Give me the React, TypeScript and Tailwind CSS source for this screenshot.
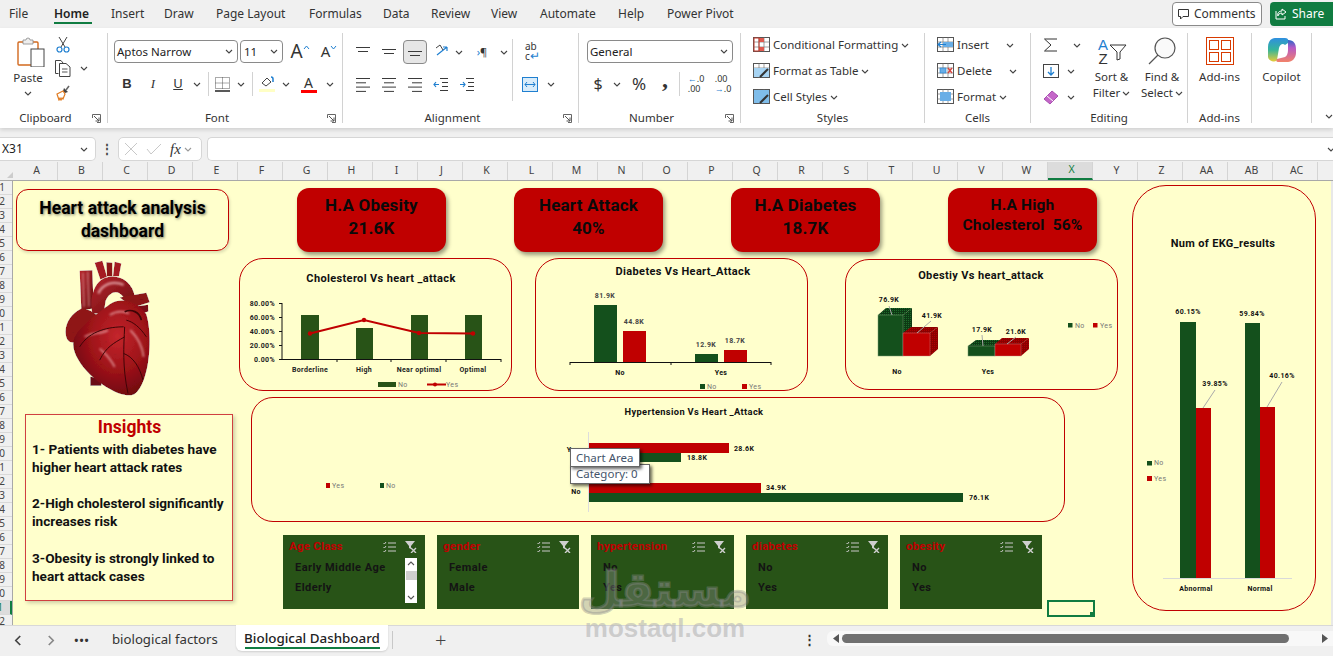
import React from "react";

const G = "#14501c";
const G2 = "#285317";
const R = "#c00000";

const Chev = ({ c = "#444", className = "" }: { c?: string; className?: string }) => (
  <svg width="8" height="5" viewBox="0 0 8 5" className={"shrink-0 " + className}>
    <path d="M1 1l3 3 3-3" fill="none" stroke={c} strokeWidth="1.1" />
  </svg>
);

const Launcher = () => (
  <svg width="9" height="9" viewBox="0 0 9 9" className="absolute right-[6px] bottom-[0px]">
    <path d="M.5 4V.5H8.5V8.5H5" fill="none" stroke="#666" />
    <path d="M2 2l5 5M7 3.5V7H3.5" fill="none" stroke="#555" />
  </svg>
);

const Group = ({
  className,
  label,
  launcher,
  children,
}: {
  className: string;
  label: string;
  launcher?: boolean;
  children?: React.ReactNode;
}) => (
  <div className={"relative flex flex-col border-r border-[#d2d2d2] shrink-0 " + className}>
    <div className="flex-1 min-h-0">{children}</div>
    <div className={"h-[15px] leading-[19px] text-center text-[11.5px] text-[#333] " + (launcher ? "pr-[16px]" : "")}>{label}</div>
    {launcher && <Launcher />}
  </div>
);

const Lines = ({ rows, dy = 0, gap = 4 }: { rows: [number, number][]; dy?: number; gap?: number }) => (
  <svg width="16" height="16" viewBox="0 0 16 16">
    {rows.map(([a, b], i) => (
      <path key={i} d={`M${a} ${3.5 + i * gap + dy}H${b}`} stroke="#3a3a3a" />
    ))}
  </svg>
);

const Cell = ({ className, children }: { className: string; children?: React.ReactNode }) => (
  <div className={"flex items-center justify-center shrink-0 " + className}>{children}</div>
);

const Combo = ({ className, text }: { className: string; text: string }) => (
  <div className={"flex items-center justify-between h-[23px] rounded-[4px] border border-[#8a8a8a] pl-[2px] pr-[4px] text-[11.5px] text-[#222] shrink-0 " + className}>
    <span>{text}</span>
    <Chev />
  </div>
);

const StyleRow = ({ icon, text, chevClass = "ml-[3px]" }: { icon: React.ReactNode; text: string; chevClass?: string }) => (
  <div className="flex items-center h-[26px] text-[11.5px] text-[#333]">
    <span className="w-[20px] flex justify-start">{icon}</span>
    <span>{text}</span>
    <Chev className={chevClass} />
  </div>
);

const GridIcon = ({ children }: { children?: React.ReactNode }) => (
  <svg width="17" height="16" viewBox="0 0 17 16">
    <rect x=".5" y=".5" width="16" height="14" fill="#fff" stroke="#555" />
    <path d="M.5 5h16M.5 10h16M6 .5v14M11 .5v14" stroke="#777" strokeWidth=".7" />
    {children}
  </svg>
);

const Heart = () => (
  <svg viewBox="190 240 270 410" className="w-[90px] h-[137px] block" aria-hidden="true">
    <defs>
      <radialGradient id="hb" cx="58%" cy="38%" r="75%">
        <stop offset="0" stopColor="#c4262c" />
        <stop offset=".5" stopColor="#9c1218" />
        <stop offset="1" stopColor="#5c070b" />
      </radialGradient>
      <linearGradient id="ha" x1="0" y1="0" x2="1" y2="1">
        <stop offset="0" stopColor="#b5252b" />
        <stop offset="1" stopColor="#6a0b10" />
      </linearGradient>
      <filter id="gloss" x="0" y="0" width="100%" height="100%">
        <feTurbulence type="fractalNoise" baseFrequency=".05 .07" numOctaves="3" seed="7" result="n" />
        <feDiffuseLighting in="n" surfaceScale="2.5" diffuseConstant="1.3" lightingColor="#fff" result="d">
          <feDistantLight azimuth="235" elevation="60" />
        </feDiffuseLighting>
        <feComposite in="d" in2="SourceAlpha" operator="in" result="dc" />
        <feBlend in="SourceGraphic" in2="dc" mode="multiply" />
      </filter>
      <filter id="soft" x="-10%" y="-10%" width="120%" height="120%">
        <feGaussianBlur stdDeviation="2.5" />
      </filter>
    </defs>
    <g filter="url(#gloss)">
      <path d="M272 590L305 595 305 617 272 617Z" fill="#6b0e12" />
      <path d="M240 272L278 270 282 385 245 390Z" fill="url(#ha)" />
      <path d="M285 248L308 242 322 290 302 298Z" fill="#a51c22" />
      <path d="M320 246L338 248 338 288 322 288Z" fill="#8c1318" />
      <path d="M345 245L365 250 358 288 340 288Z" fill="#a51c22" />
      <path d="M278 400C268 340 290 300 320 292C362 280 400 310 405 348L372 352C355 328 332 332 318 362L312 400Z" fill="url(#ha)" />
      <path d="M360 352L440 338 450 366 400 382Z" fill="#8c1318" />
      <path d="M385 382L445 374 446 394 400 408Z" fill="#7a1015" />
      <path d="M245 385C215 400 195 430 198 460C200 490 222 492 232 480C250 440 280 420 292 405C280 395 262 385 245 385Z" fill="#8f1419" />
      <path d="M222 480C235 440 290 402 330 372C372 345 420 372 440 402C452 440 452 500 446 540C440 590 420 642 395 645C360 650 300 612 270 582C240 552 214 512 222 480Z" fill="url(#hb)" />
    </g>
    <g filter="url(#soft)" fill="none" opacity=".75">
      <path d="M250 278L253 380M264 274L268 380" stroke="#e9a5a8" strokeWidth="4" />
      <path d="M296 340C308 312 340 300 372 314" stroke="#f3c0c2" strokeWidth="7" />
      <path d="M392 450C412 470 428 500 432 530M255 470C280 455 305 462 325 450M330 405C350 392 370 392 388 400M300 505C315 520 330 530 345 560" stroke="#f1b8ba" strokeWidth="5" />
    </g>
    <path d="M375 440C372 500 368 560 385 640M375 470C340 490 320 500 300 540M372 520C400 530 420 560 430 600M372 440C330 440 270 450 240 500M380 420C400 425 420 440 440 470" stroke="#3f0406" strokeWidth="3" fill="none" />
    <path d="M375 395C395 385 420 395 425 420" stroke="#3f0406" strokeWidth="5" fill="none" />
  </svg>
);

const T = ({
  x,
  y,
  s = 7,
  c = "#111",
  a = "middle",
  w = 700,
  ls = 0.35,
  children,
}: {
  x: number;
  y: number;
  s?: number;
  c?: string;
  a?: "middle" | "start" | "end";
  w?: number;
  ls?: number;
  children: React.ReactNode;
}) => (
  <text x={x} y={y} fontSize={s} fill={c} textAnchor={a} fontWeight={w} fontFamily="Roboto, sans-serif" letterSpacing={ls} dominantBaseline="central">
    {children}
  </text>
);

const SlicerIcons = () => (
  <div className="flex items-center gap-[8px]">
    <svg width="13" height="12" viewBox="0 0 13 12">
      <path d="M5 2h8M5 6h8M5 10h8" stroke="#c9c9c9" />
      <path d="M.5 2l1 1L3 1M.5 6l1 1L3 5M.5 10l1 1L3 9" fill="none" stroke="#c9c9c9" />
    </svg>
    <svg width="13" height="12" viewBox="0 0 13 12">
      <path d="M1 0h10L7 5v3L5 7V5Z" fill="#cfcfcf" />
      <path d="M7 7l5 5M12 7l-5 5" stroke="#cfcfcf" strokeWidth="1.4" />
    </svg>
  </div>
);

const Slicer = ({ title, items, scroll, className = "w-[142px]" }: { title: string; items: string[]; scroll?: boolean; className?: string }) => (
  <div className={"relative h-[74px] bg-[#285317] pl-[6px] pr-[6px] pt-[2px] shrink-0 " + className}>
    <div className="flex items-center justify-between h-[20px] pr-[2px]">
      <span className="text-[11.5px] font-bold text-[#c00000] tracking-[0.2px]">{title}</span>
      <SlicerIcons />
    </div>
    <div className="mt-[1px] pl-[6px] text-[11px] font-bold text-[#141414] tracking-[0.45px]">
      {items.map((t) => (
        <div key={t} className="h-[20px] leading-[20px]">
          {t}
        </div>
      ))}
    </div>
    {scroll && (
      <div className="absolute right-[8px] top-[23px] w-[12px] h-[45px] bg-white flex flex-col items-center justify-between py-[3px]">
        <Chev c="#555" className="rotate-180" />
        <div className="w-[11px] h-[9px] -mt-[10px] bg-[#cfcfcf]" />
        <Chev c="#555" />
      </div>
    )}
  </div>
);

const rows = Array.from({ length: 32 }, (_, i) => i + 1);
const cols = "A B C D E F G H I J K L M N O P Q R S T U V W X Y Z AA AB AC".split(" ");

const tabs: [string, string][] = [
  ["File", "w-[45px]"],
  ["Home", "w-[57px]"],
  ["Insert", "w-[53px]"],
  ["Draw", "w-[52px]"],
  ["Page Layout", "w-[93px]"],
  ["Formulas", "w-[74px]"],
  ["Data", "w-[48px]"],
  ["Review", "w-[60px]"],
  ["View", "w-[49px]"],
  ["Automate", "w-[78px]"],
  ["Help", "w-[49px]"],
  ["Power Pivot", "w-[80px]"],
];

export default function App() {
  return (
    <div className="relative w-[1333px] h-[656px] overflow-hidden bg-[#f0f0f0] font-['Noto_Sans',sans-serif] text-[#333]">
      {/* Tabs */}
      <div className="h-[28px] flex items-center pl-[9px] text-[12px] relative">
        {tabs.map(([t, w]) => (
          <div key={t} className={"relative shrink-0 " + w}>
            <span className={t === "Home" ? "font-semibold text-[#222]" : ""}>{t}</span>
            {t === "Home" && <div className="absolute left-0 top-[17px] w-[38px] h-[2px] bg-[#107c41]" />}
          </div>
        ))}
        <div className="ml-auto flex items-center gap-[8px] -mr-[6px]">
          <div className="w-[90px] h-[24px] rounded-[4px] border border-[#8a8a8a] bg-white flex items-center pl-[5px] gap-[5px] text-[12px]">
            <svg width="11" height="11" viewBox="0 0 11 11">
              <path d="M.5.5h10v7H5L2.5 10V7.5h-2Z" fill="none" stroke="#333" />
            </svg>
            Comments
          </div>
          <div className="w-[69px] h-[24px] rounded-l-[4px] bg-[#107c41] text-white flex items-center pl-[5px] gap-[5px] text-[12px]">
            <svg width="12" height="12" viewBox="0 0 12 12">
              <path d="M7 1l4 3-4 3V5C4 5 3 7 3 8 2 5 4 3 7 3ZM1 3v8h9V8" fill="none" stroke="#fff" />
            </svg>
            Share
          </div>
        </div>
      </div>

      {/* Ribbon */}
      <div className="h-[100px] bg-white flex py-[5px] [box-shadow:0_2px_4px_#0002] relative">
        <Group className="w-[108px]" label="Clipboard" launcher>
          <div className="flex">
            <div className="ml-[9px] w-[38px] flex flex-col items-center text-[11.5px]">
              <svg width="28" height="30" viewBox="0 0 28 30" className="mt-[4px] mb-[3px] ml-[5px]">
                <rect x="1" y="5" width="20" height="23" rx="1" fill="#fff" stroke="#d2691e" strokeWidth="1.4" />
                <path d="M6 5V3h3a2 2 0 0 1 4 0h3v4H6Z" fill="#eee" stroke="#888" strokeWidth=".8" />
                <rect x="14" y="12" width="13" height="18" fill="#fff" stroke="#444" />
              </svg>
              <span className="leading-[16px]">Paste</span>
              <Chev className="mt-[5px]" />
            </div>
            <div className="ml-[8px] flex flex-col items-start pt-[3px]">
              <svg width="16" height="17" viewBox="0 0 16 17" className="mb-[7px]">
                <path d="M4 1l6 10M12 1L6 11" stroke="#444" strokeWidth="1" />
                <circle cx="4.5" cy="13.5" r="2.5" fill="none" stroke="#1f7fd0" strokeWidth="1.2" />
                <circle cx="11.5" cy="13.5" r="2.5" fill="none" stroke="#1f7fd0" strokeWidth="1.2" />
              </svg>
              <div className="flex items-center gap-[9px] mb-[8px]">
                <svg width="16" height="17" viewBox="0 0 16 17">
                  <path d="M3.5 13.5H.5V.5H6L8 3" fill="none" stroke="#444" />
                  <path d="M4.5 3.5H11L15 7V16.5H4.5Z" fill="#fff" stroke="#444" />
                  <path d="M7 9h5.5M7 12h5.5" stroke="#555" />
                </svg>
                <Chev />
              </div>
              <svg width="16" height="16" viewBox="0 0 16 16">
                <path d="M9 3l4 4-3 1-2-2Z" fill="#444" />
                <path d="M8 6L2 9l2 6 1-2 1 2 1-2 1 1 2-5Z" fill="#fff" stroke="#e07a1f" strokeWidth="1.2" />
                <path d="M11 5l3-4" stroke="#666" strokeWidth="1.6" />
              </svg>
            </div>
          </div>
        </Group>

        <Group className="w-[235px]" label="Font" launcher>
          <div className="flex items-center gap-[2px] mt-[7px] ml-[6px] h-[23px]">
            <Combo className="w-[124px]" text="Aptos Narrow" />
            <Combo className="w-[43px] pl-[3px]" text="11" />
            <Cell className="w-[28px] ml-[1px] text-[#333]">
              <span className="text-[19px] leading-none">A</span>
              <svg width="7" height="5" viewBox="0 0 7 5" className="mb-[8px]"><path d="M1 4l2.5-3L6 4" fill="none" stroke="#1f7fd0" /></svg>
            </Cell>
            <Cell className="w-[26px] text-[#333]">
              <span className="text-[15px] leading-none">A</span>
              <svg width="7" height="5" viewBox="0 0 7 5" className="mb-[8px]"><path d="M1 1l2.5 3L6 1" fill="none" stroke="#1f7fd0" /></svg>
            </Cell>
          </div>
          <div className="flex items-center mt-[9px] ml-[6px] h-[24px]">
            <Cell className="w-[26px] font-bold text-[13px] font-['Liberation_Sans']">B</Cell>
            <Cell className="w-[26px] italic text-[13px] font-['Liberation_Serif']">I</Cell>
            <Cell className="w-[24px] text-[13px] underline">U</Cell>
            <Cell className="w-[14px]"><Chev /></Cell>
            <div className="w-px h-[24px] bg-[#d2d2d2] ml-[4px]" />
            <Cell className="w-[26px]">
              <svg width="15" height="15" viewBox="0 0 15 15">
                <path d="M.5.5h14v11H.5ZM7.5.5v11M.5 6h14" stroke="#555" strokeDasharray="1 1" fill="none" />
                <path d="M0 14h15" stroke="#222" strokeWidth="1.5" />
              </svg>
            </Cell>
            <Cell className="w-[12px]"><Chev /></Cell>
            <div className="w-px h-[24px] bg-[#d2d2d2] ml-[5px]" />
            <Cell className="w-[28px]">
              <svg width="16" height="16" viewBox="0 0 16 16">
                <path d="M3 7l5-5 4 4-5 4Z" fill="#fff" stroke="#444" />
                <path d="M12 1a2 2 0 0 1 2 2v3" fill="none" stroke="#1f7fd0" strokeWidth="1.5" />
                <rect x="0" y="13" width="16" height="3" fill="#ffffc5" />
              </svg>
            </Cell>
            <Cell className="w-[10px]"><Chev /></Cell>
            <Cell className="w-[35px]">
              <div className="flex flex-col items-center">
                <span className="text-[14px] leading-[14px]">A</span>
                <div className="w-[16px] h-[3px] bg-[#ff0000]" />
              </div>
            </Cell>
            <Cell className="w-[8px]"><Chev /></Cell>
          </div>
        </Group>

        <Group className="w-[236px]" label="Alignment" launcher>
          <div className="flex h-[77px]">
            <div className="ml-[7px]">
              <div className="flex items-center mt-[7px] h-[24px]">
                <Cell className="w-[26px]"><Lines rows={[[1, 15], [3, 13]]} /></Cell>
                <Cell className="w-[26px]"><Lines rows={[[1, 15], [3, 13]]} dy={2} /></Cell>
                <Cell className="w-[24px] mx-[1px] h-[24px] rounded-[4px] border border-[#8a8a8a] bg-[#e6e6e6]"><Lines rows={[[1, 15], [3, 13]]} dy={4} /></Cell>
                <Cell className="w-[26px] pl-[3px]">
                  <svg width="16" height="16" viewBox="0 0 16 16">
                    <path d="M2 11L12 3M12 3H8M12 3v4" fill="none" stroke="#1f7fd0" strokeWidth="1.2" />
                    <path d="M1 4l4-3 3 5" fill="none" stroke="#444" />
                  </svg>
                </Cell>
                <Cell className="w-[10px]"><Chev /></Cell>
                <Cell className="w-[32px] pl-[4px] text-[11px]">
                  <span className="text-[#1f7fd0]">›</span>¶
                </Cell>
                <Cell className="w-[10px] ml-[3px]"><Chev /></Cell>
              </div>
              <div className="flex items-center mt-[8px] h-[24px]">
                <Cell className="w-[26px]"><Lines rows={[[1, 15], [1, 11], [1, 15], [1, 11]]} dy={-1} gap={4.3} /></Cell>
                <Cell className="w-[26px]"><Lines rows={[[1, 15], [3, 13], [1, 15], [3, 13]]} dy={-1} gap={4.3} /></Cell>
                <Cell className="w-[26px]"><Lines rows={[[1, 15], [5, 15], [1, 15], [5, 15]]} dy={-1} gap={4.3} /></Cell>
                <Cell className="w-[26px]">
                  <svg width="16" height="16" viewBox="0 0 16 16">
                    <path d="M7 2.5h8M9 6.5h6M9 10.5h6M7 14.5h8" stroke="#3a3a3a" />
                    <path d="M6 8.5H1M3 6L1 8.5 3 11" fill="none" stroke="#1f7fd0" strokeWidth="1.2" />
                  </svg>
                </Cell>
                <Cell className="w-[26px]">
                  <svg width="16" height="16" viewBox="0 0 16 16">
                    <path d="M7 2.5h8M9 6.5h6M9 10.5h6M7 14.5h8" stroke="#3a3a3a" />
                    <path d="M1 8.5h5M4 6l2 2.5L4 11" fill="none" stroke="#1f7fd0" strokeWidth="1.2" />
                  </svg>
                </Cell>
              </div>
            </div>
            <div className="w-px h-[62px] mt-[6px] ml-[3px] bg-[#d2d2d2]" />
            <div className="ml-[9px]">
              <div className="mt-[6px] h-[24px] flex items-center ml-[3px]">
                <div className="text-[10px] leading-[9px] w-[24px]">
                  ab
                  <br />c<span className="text-[#1f7fd0] text-[12px]">↵</span>
                </div>
              </div>
              <div className="flex items-center mt-[9px] gap-[9px] h-[24px]">
                <svg width="16" height="15" viewBox="0 0 16 15">
                  <rect x=".5" y=".5" width="15" height="14" fill="#d8ecfa" stroke="#1f7fd0" />
                  <path d="M3 7.5h10M5 5L3 7.5 5 10M11 5l2 2.5L11 10" fill="none" stroke="#1f7fd0" />
                </svg>
                <Chev />
              </div>
            </div>
          </div>
        </Group>

        <Group className="w-[162px]" label="Number" launcher>
          <Combo className="w-[146px] mt-[7px] ml-[8px]" text="General" />
          <div className="flex items-center mt-[9px] ml-[7px] h-[24px]">
            <Cell className="w-[24px] text-[16px]">$</Cell>
            <Cell className="w-[14px]"><Chev /></Cell>
            <Cell className="w-[30px] text-[17px]">%</Cell>
            <Cell className="w-[22px] text-[24px] font-bold pb-[10px] font-['Liberation_Serif']">,</Cell>
            <div className="w-px h-[24px] bg-[#d2d2d2] ml-[3px]" />
            <Cell className="w-[28px] ml-[2px]">
              <div className="text-[9px] leading-[10px] text-[#333]">
                <span className="text-[#1f7fd0]">←</span>.0
                <br />.00
              </div>
            </Cell>
            <Cell className="w-[26px]">
              <div className="text-[9px] leading-[10px] text-[#333]">
                .00
                <br />
                <span className="text-[#1f7fd0]">→</span>.0
              </div>
            </Cell>
          </div>
        </Group>

        <Group className="w-[184px]" label="Styles">
          <div className="pl-[12px] -mt-[1px]">
            <StyleRow
              text="Conditional Formatting"
              icon={
                <GridIcon>
                  <rect x="6" y="1" width="5" height="4" fill="#e05a4f" />
                  <rect x="6" y="10" width="5" height="4" fill="#e05a4f" />
                  <rect x="1" y="1" width="5" height="13" fill="none" stroke="#c0392b" />
                </GridIcon>
              }
            />
            <StyleRow
              text="Format as Table"
              icon={
                <GridIcon>
                  <rect x="1" y="5" width="15" height="9" fill="#a7d4f3" />
                  <path d="M7 14l8-8" stroke="#333" strokeWidth="2" />
                </GridIcon>
              }
            />
            <StyleRow
              text="Cell Styles"
              icon={
                <GridIcon>
                  <rect x="1" y="1" width="15" height="13" fill="#7fbdea" />
                  <path d="M7 14l8-8" stroke="#333" strokeWidth="2" />
                </GridIcon>
              }
            />
          </div>
        </Group>

        <Group className="w-[106px]" label="Cells">
          <div className="pl-[12px] -mt-[1px]">
            <StyleRow
              text="Insert"
              chevClass="ml-[17px]"
              icon={
                <GridIcon>
                  <rect x="6" y="5" width="10" height="5" fill="#69aee6" />
                  <path d="M9 7.5H1M4 5L1 7.5 4 10" fill="none" stroke="#1f7fd0" strokeWidth="1.2" />
                </GridIcon>
              }
            />
            <StyleRow
              text="Delete"
              chevClass="ml-[17px]"
              icon={
                <GridIcon>
                  <rect x="3" y="5" width="6" height="5" fill="#69aee6" stroke="#1f7fd0" strokeWidth=".6" />
                  <path d="M11 5l4 5M15 5l-4 5" stroke="#d9413a" strokeWidth="1.3" />
                </GridIcon>
              }
            />
            <StyleRow
              text="Format"
              icon={
                <GridIcon>
                  <rect x="3" y="3" width="11" height="9" fill="#69aee6" />
                </GridIcon>
              }
            />
          </div>
        </Group>

        <Group className="w-[157px]" label="Editing">
          <div className="flex">
            <div className="w-[58px] pl-[12px] -mt-[1px]">
              <div className="flex items-center h-[26px] gap-[15px]">
                <svg width="15" height="14" viewBox="0 0 15 14">
                  <path d="M14 1H1.5L8 7 1.5 13H14" fill="none" stroke="#333" />
                </svg>
                <Chev />
              </div>
              <div className="flex items-center h-[26px] gap-[8px]">
                <svg width="16" height="15" viewBox="0 0 16 15">
                  <rect x=".5" y=".5" width="15" height="13" fill="#fff" stroke="#444" />
                  <path d="M8 3v8M5 8l3 3 3-3" fill="none" stroke="#1f7fd0" strokeWidth="1.3" />
                </svg>
                <Chev />
              </div>
              <div className="flex items-center h-[26px] gap-[8px]">
                <svg width="16" height="16" viewBox="0 0 16 16">
                  <path d="M1 10l8-8 6 5-8 8Z" fill="#c466c8" stroke="#a84fb0" />
                  <path d="M4 7l6 5" stroke="#fff" />
                </svg>
                <Chev />
              </div>
            </div>
            <div className="flex flex-col items-center w-[45px] text-[11.5px] leading-[16px] pt-[5px]">
              <svg width="30" height="27" viewBox="0 0 30 27" className="mb-[4px] overflow-visible">
                <text x="6" y="12" fontSize="15" fill="#1f7fd0" textAnchor="middle" fontFamily="Liberation Sans">A</text>
                <text x="6" y="26" fontSize="15" fill="#333" textAnchor="middle" fontFamily="Liberation Sans">Z</text>
                <path d="M13 7h16l-6 7v7l-3 1v-8Z" fill="#fff" stroke="#333" />
              </svg>
              <span>Sort &amp;</span>
              <span className="flex items-center whitespace-nowrap gap-[2px]">
                Filter <Chev />
              </span>
            </div>
            <div className="flex flex-col items-center w-[48px] ml-[4px] text-[11.5px] leading-[16px] pt-[4px]">
              <svg width="30" height="28" viewBox="0 0 30 28" className="mb-[4px]">
                <circle cx="18" cy="11" r="10" fill="#fafafa" stroke="#555" strokeWidth="1.2" />
                <path d="M11 18L2 27" stroke="#555" strokeWidth="1.2" />
              </svg>
              <span>Find &amp;</span>
              <span className="flex items-center whitespace-nowrap gap-[2px]">
                Select <Chev />
              </span>
            </div>
          </div>
        </Group>

        <Group className="w-[64px]" label="Add-ins">
          <div className="flex flex-col items-center text-[11.5px] pt-[4px]">
            <svg width="28" height="28" viewBox="0 0 28 28" className="mb-[3px]">
              <rect x=".5" y=".5" width="27" height="27" fill="#fff" stroke="#d83b01" />
              <rect x="3.5" y="3.5" width="9" height="9" fill="none" stroke="#d83b01" />
              <rect x="15.5" y="3.5" width="9" height="9" fill="none" stroke="#d83b01" />
              <rect x="3.5" y="15.5" width="9" height="9" fill="none" stroke="#d83b01" />
              <rect x="15.5" y="15.5" width="9" height="9" fill="none" stroke="#d83b01" />
            </svg>
            Add-ins
          </div>
        </Group>

        <Group className="w-[60px]" label="">
          <div className="flex flex-col items-center text-[11.5px] pt-[3px]">
            <svg width="30" height="29" viewBox="0 0 30 29" className="mb-[3px]">
              <defs>
                <linearGradient id="cp1" x1="0" y1="0" x2="0" y2="1">
                  <stop offset="0" stopColor="#2f8fe0" />
                  <stop offset=".5" stopColor="#35b59a" />
                  <stop offset="1" stopColor="#e6cb3a" />
                </linearGradient>
                <linearGradient id="cp2" x1="0" y1="0" x2="0" y2="1">
                  <stop offset="0" stopColor="#2a66c8" />
                  <stop offset=".35" stopColor="#b65ac6" />
                  <stop offset="1" stopColor="#f2826a" />
                </linearGradient>
              </defs>
              <path d="M8 2h10c3 0 4 2 3 5L18 9c-2-2-5-1-6 3l-2 12c-1 3-9 1-9-3V11C1 6 4 2 8 2Z" fill="url(#cp1)" />
              <path d="M21 4c6 0 8 4 8 9v4c0 5-4 9-8 9H11c-2 0-2-2-1-3l8-2c2-1 3-4 3-7Z" fill="url(#cp2)" />
            </svg>
            Copilot
          </div>
        </Group>

        <div className="flex-1 relative">
          <Chev className="absolute right-[0px] bottom-[4px]" />
        </div>
      </div>

      {/* Formula bar */}
      <div className="h-[34px] pt-[9px] flex items-start">
        <div className="w-[96px] h-[24px] bg-white rounded-r-[5px] border border-l-0 border-[#d6d6d6] flex items-center justify-between pl-[2px] pr-[7px] text-[12px] text-[#222]">
          X31 <Chev />
        </div>
        <div className="w-[22px] h-[24px] flex items-center justify-center text-[#444] font-bold text-[12px]">⋮</div>
        <div className="w-[84px] h-[24px] bg-white rounded-[5px] border border-[#d6d6d6] flex items-center pl-[6px] gap-[9px]">
          <svg width="12" height="12" viewBox="0 0 12 12"><path d="M0 0l12 12M12 0L0 12" stroke="#c8c8c8" /></svg>
          <svg width="16" height="12" viewBox="0 0 16 12"><path d="M1 6l4 5L15 1" fill="none" stroke="#c8c8c8" /></svg>
          <span className="font-['Liberation_Serif'] italic text-[15px] text-[#333] -ml-[1px]">fx</span>
          <Chev c="#999" className="-ml-[6px]" />
        </div>
        <div className="flex-1 ml-[5px] h-[24px] bg-white rounded-l-[5px] border border-r-0 border-[#d6d6d6] flex items-center justify-end">
          <Chev className="-mr-[2px]" />
        </div>
      </div>

      {/* Column headers */}
      <div className="h-[19px] flex text-[10.5px] text-[#444] border-b border-[#a8a8a8]">
        <div className="w-[13px] shrink-0 relative">
          <svg width="6" height="6" viewBox="0 0 6 6" className="absolute right-[0px] bottom-[2px]"><path d="M6 0v6H0Z" fill="#ccc" /></svg>
        </div>
        {cols.map((c) => (
          <div
            key={c}
            className={
              "w-[45px] shrink-0 flex items-center justify-center pl-[3px] border-r border-[#d4d4d4] " +
              (c === "X" ? "bg-[#dcdcdc] text-[#107c41] border-b-2 border-b-[#107c41]" : "")
            }
          >
            {c}
          </div>
        ))}
      </div>

      {/* Sheet */}
      <div className="h-[444px] flex overflow-hidden font-['Roboto',sans-serif]">
        <div className="w-[13px] shrink-0 border-r border-[#a8a8a8] font-['Noto_Sans',sans-serif] text-[10px] text-[#444]">
          {rows.map((n) => (
            <div
              key={n}
              className={
                "h-[14px] overflow-hidden flex items-center justify-end pr-[7px] border-b border-[#d9d9d9] " +
                (n === 31 ? "bg-[#dcdcdc] text-[#107c41] border-r-2 border-r-[#107c41]" : "")
              }
            >
              {n % 10}
            </div>
          ))}
        </div>
        <div className="flex-1 bg-[#ffffcc] flex min-w-0">
          {/* Left column */}
          <div className="w-[226px] shrink-0">
            <div className="ml-[3px] mt-[8px] w-[213px] h-[62px] rounded-[12px] border-[1.5px] border-[#c00000] flex items-center justify-center text-center text-[17.5px] leading-[23px] font-bold text-black [text-shadow:1px_1px_3px_#0008] [box-shadow:1px_2px_3px_#0002]">
              Heart attack analysis
              <br />
              dashboard
            </div>
            <div className="mt-[9px] ml-[50px]">
              <Heart />
            </div>
            <div className="ml-[12px] mt-[17px] w-[208px] h-[187px] border border-[#d04040] [box-shadow:2px_2px_4px_#0003] pl-[6px] text-black">
              <div className="text-center text-[17.5px] leading-[25px] font-bold text-[#c00000] pr-[5px]">Insights</div>
              <div className="text-[13.6px] leading-[18px] font-bold text-[#111]">
                <div>1- Patients with diabetes have</div>
                <div>higher heart attack rates</div>
                <div className="mt-[18px]">2-High cholesterol significantly</div>
                <div>increases risk</div>
                <div className="mt-[19px]">3-Obesity is strongly linked to</div>
                <div>heart attack cases</div>
              </div>
            </div>
          </div>

          {/* Middle column */}
          <div className="w-[879px] shrink-0">
            <div className="flex gap-[68px] pl-[58px] mt-[7px] text-[#0a0a0a] font-bold">
              <div className="w-[149px] h-[64px] pb-[6px] rounded-[12px] bg-[#c00000] [box-shadow:2px_3px_4px_#0006] flex items-center justify-center text-center text-[17px] leading-[23px] tracking-[0.2px]">
                <div>H.A Obesity<br />21.6K</div>
              </div>
              <div className="w-[149px] h-[64px] pb-[6px] rounded-[12px] bg-[#c00000] [box-shadow:2px_3px_4px_#0006] flex items-center justify-center text-center text-[17px] leading-[23px] tracking-[0.2px]">
                <div>Heart Attack<br />40%</div>
              </div>
              <div className="w-[149px] h-[64px] pb-[6px] rounded-[12px] bg-[#c00000] [box-shadow:2px_3px_4px_#0006] flex items-center justify-center text-center text-[17px] leading-[23px] tracking-[0.2px]">
                <div>H.A Diabetes<br />18.7K</div>
              </div>
              <div className="w-[149px] h-[64px] pb-[10px] rounded-[12px] bg-[#c00000] [box-shadow:2px_3px_4px_#0006] flex items-center justify-center text-center text-[15.5px] leading-[20px] tracking-[0.2px]">
                <div>H.A High<br />Cholesterol&nbsp; 56%</div>
              </div>
            </div>

            <div className="flex mt-[6px] items-start">
              {/* Chart 1 */}
              <div className="w-[273px] h-[133px] rounded-[24px] border border-[#c00000] overflow-hidden shrink-0">
                <svg viewBox="240 259 271 131" className="w-[271px] h-[131px] block">
                  <T x={381} y={278} s={11}>Cholesterol Vs heart _attack</T>
                  {[[80, 303.5], [60, 317.5], [40, 331.5], [20, 345.5], [0, 359.5]].map(([v, y]) => (
                    <g key={v}>
                      <path d={`M279 ${y}H282`} stroke="#111" />
                      <T x={275} y={y} a="end" s={7} c="#222">{v === 0 ? "0.00%" : `${v}.00%`}</T>
                    </g>
                  ))}
                  <path d="M282 303V359.5H501" stroke="#111" fill="none" />
                  {[337, 391, 446, 501].map((x) => (
                    <path key={x} d={`M${x} 359v3`} stroke="#111" />
                  ))}
                  <rect x="301" y="315" width="18" height="44" fill={G2} />
                  <rect x="356" y="328" width="17" height="31" fill={G2} />
                  <rect x="411" y="315" width="17" height="44" fill={G2} />
                  <rect x="465" y="315" width="17" height="44" fill={G2} />
                  <polyline points="310,333.5 364,320 419,333 473,333.5" fill="none" stroke={R} strokeWidth="2" />
                  {[[310, 333.5], [364, 320], [419, 333], [473, 333.5]].map(([x, y]) => (
                    <circle key={x} cx={x} cy={y} r="2.2" fill={R} />
                  ))}
                  <T x={310} y={370} c="#222">Borderline</T>
                  <T x={364} y={370} c="#222">High</T>
                  <T x={419} y={370} c="#222">Near optimal</T>
                  <T x={473} y={370} c="#222">Optimal</T>
                  <rect x="378" y="382" width="18" height="5" fill={G2} />
                  <T x={398} y={384.5} a="start" w={400} c="#777">No</T>
                  <path d="M427 384.5H446" stroke={R} strokeWidth="2" />
                  <circle cx="435" cy="384.5" r="2" fill={R} />
                  <T x={446} y={384.5} a="start" w={400} c="#777">Yes</T>
                </svg>
              </div>
              {/* Chart 2 */}
              <div className="ml-[23px] w-[273px] h-[133px] rounded-[24px] border border-[#c00000] overflow-hidden shrink-0">
                <svg viewBox="536 259 271 131" className="w-[271px] h-[131px] block">
                  <T x={683} y={271.5} s={11}>Diabetes Vs Heart_Attack</T>
                  <rect x="594" y="305" width="23" height="57" fill={G} />
                  <rect x="623" y="331" width="23" height="31" fill={R} />
                  <rect x="695" y="354" width="23" height="8" fill={G} />
                  <rect x="724" y="350" width="23" height="12" fill={R} />
                  <path d="M570 362.5H771M570 362v3M671 362v3M771 362v3" stroke="#111" fill="none" />
                  <T x={605} y={296} c="#444">81.9K</T>
                  <T x={634} y={322} c="#444">44.8K</T>
                  <T x={706} y={345} c="#444">12.9K</T>
                  <T x={735} y={341} c="#444">18.7K</T>
                  <T x={620} y={373}>No</T>
                  <T x={721} y={373}>Yes</T>
                  <rect x="700" y="384" width="5" height="5" fill={G} />
                  <T x={707} y={386.5} a="start" w={400} c="#777">No</T>
                  <rect x="742" y="384" width="5" height="5" fill={R} />
                  <T x={749} y={386.5} a="start" w={400} c="#777">Yes</T>
                </svg>
              </div>
              {/* Chart 3 */}
              <div className="ml-[37px] mt-[1px] w-[273px] h-[131px] rounded-[24px] border border-[#c00000] overflow-hidden shrink-0">
                <svg viewBox="846 260 271 129" className="w-[271px] h-[129px] block">
                  <defs>
                    <pattern id="dg" width="2" height="2" patternUnits="userSpaceOnUse">
                      <rect width="2" height="2" fill="#0d3a14" />
                      <rect width="1" height="1" fill="#1e6b2a" />
                    </pattern>
                    <pattern id="dr" width="2" height="2" patternUnits="userSpaceOnUse">
                      <rect width="2" height="2" fill="#8a0000" />
                      <rect width="1" height="1" fill="#b00000" />
                    </pattern>
                  </defs>
                  <T x={981} y={275} s={11}>Obestiy Vs heart_attack</T>
                  <path d="M878 315L886 308H912L903 315Z" fill="url(#dg)" />
                  <path d="M903 315L912 308V350L903 356Z" fill="url(#dg)" />
                  <rect x="878" y="315" width="25" height="41" fill={G} stroke="#7a9a70" strokeWidth=".5" />
                  <path d="M903 333L911 327H938L930 333Z" fill="url(#dr)" />
                  <path d="M930 333L938 327V349L930 356Z" fill="url(#dr)" />
                  <rect x="903" y="333" width="27" height="23" fill={R} stroke="#c88" strokeWidth=".4" />
                  <path d="M968 346L976 340H1003L995 346Z" fill="url(#dg)" />
                  <rect x="968" y="346" width="27" height="10" fill={G} stroke="#7a9a70" strokeWidth=".5" />
                  <path d="M995 344L1002 338H1029L1021 344Z" fill="url(#dr)" />
                  <path d="M1021 344L1029 338V349L1021 356Z" fill="url(#dr)" />
                  <rect x="995" y="344" width="26" height="12" fill={R} stroke="#c88" strokeWidth=".4" />
                  <path d="M889 306L892 315M931 321L917 333M982 335L983 346M1016 337L1007 344" stroke="#aaa" />
                  <T x={889} y={300}>76.9K</T>
                  <T x={932} y={316}>41.9K</T>
                  <T x={982} y={330}>17.9K</T>
                  <T x={1016} y={332}>21.6K</T>
                  <T x={897} y={372}>No</T>
                  <T x={988} y={372}>Yes</T>
                  <rect x="1068" y="323" width="4.5" height="4.5" fill={G} />
                  <T x={1075} y={325.5} a="start" w={400} c="#777">No</T>
                  <rect x="1093" y="323" width="4.5" height="4.5" fill={R} />
                  <T x={1100} y={325.5} a="start" w={400} c="#777">Yes</T>
                </svg>
              </div>
            </div>

            {/* Hypertension */}
            <div className="ml-[12px] mt-[6px] w-[814px] h-[125px] rounded-[22px] border border-[#c00000] overflow-hidden">
              <svg viewBox="252 398 812 123" className="w-[812px] h-[123px] block">
                <T x={694} y={411} s={9.3}>Hypertension Vs Heart _Attack</T>
                <path d="M588.5 432V512" stroke="#ddd" />
                <rect x="589" y="443" width="140" height="10" fill={R} />
                <rect x="589" y="453" width="92" height="9" fill={G} />
                <rect x="589" y="483" width="172" height="10" fill={R} />
                <rect x="589" y="493" width="374" height="9" fill={G} />
                <T x={734} y={449} a="start">28.6K</T>
                <T x={687} y={458} a="start">18.8K</T>
                <T x={766} y={488} a="start">34.9K</T>
                <T x={969} y={498} a="start">76.1K</T>
                <T x={576} y={492}>No</T>
                <T x={573} y={450}>Yes</T>
                <rect x="326" y="483" width="4" height="5" fill={R} />
                <T x={332} y={485.5} a="start" w={400} c="#777">Yes</T>
                <rect x="380" y="483" width="4" height="5" fill={G} />
                <T x={386} y={485.5} a="start" w={400} c="#777">No</T>
              </svg>
            </div>

            {/* Slicers */}
            <div className="flex gap-[12px] ml-[44px] mt-[13px]">
              <Slicer title="Age Class" items={["Early Middle Age", "Elderly"]} scroll />
              <Slicer title="gender" items={["Female", "Male"]} />
              <Slicer title="hypertension" items={["No", "Yes"]} className="w-[143px]" />
              <Slicer title="diabetes" items={["No", "Yes"]} />
              <Slicer title="obesity" items={["No", "Yes"]} />
            </div>
          </div>

          {/* EKG */}
          <div className="ml-[14px] mt-[4px] w-[184px] h-[426px] rounded-[34px] border border-[#c00000] overflow-hidden shrink-0">
            <svg viewBox="1133 186 182 424" className="w-[182px] h-[424px] block">
              <T x={1223} y={243.5} s={11}>Num of EKG_results</T>
              <rect x="1180" y="322" width="16" height="256" fill={G} />
              <rect x="1196" y="408" width="15" height="170" fill={R} />
              <rect x="1245" y="323" width="15" height="255" fill={G} />
              <rect x="1260" y="407" width="15" height="171" fill={R} />
              <path d="M1163 578.5H1292" stroke="#d9d9d9" />
              <path d="M1215 390L1203 408M1282 382L1267 407" stroke="#aaa" />
              <T x={1188} y={312}>60.15%</T>
              <T x={1252} y={314}>59.84%</T>
              <T x={1215} y={384}>39.85%</T>
              <T x={1282} y={376}>40.16%</T>
              <T x={1196} y={589}>Abnormal</T>
              <T x={1260} y={589}>Normal</T>
              <rect x="1147" y="461" width="5" height="4.5" fill={G} />
              <T x={1154} y={463} a="start" w={400} c="#777">No</T>
              <rect x="1147" y="476" width="5" height="5" fill={R} />
              <T x={1154} y={478.5} a="start" w={400} c="#777">Yes</T>
            </svg>
          </div>
        </div>
        <div className="w-[2px] bg-[#e8e8e8] shrink-0" />
      </div>

      {/* Bottom bar */}
      <div className="h-[31px] flex items-start border-t border-[#d8d8d8] text-[13.2px] text-[#333]">
        <div className="w-[35px] h-[28px] flex items-center justify-center">
          <Chev className="rotate-90 scale-150" />
        </div>
        <div className="w-[32px] h-[28px] flex items-center justify-center">
          <Chev c="#888" className="-rotate-90 scale-150" />
        </div>
        <div className="w-[30px] h-[28px] flex items-center justify-center font-bold text-[11px] tracking-[1px]">•••</div>
        <div className="ml-[15px] h-[28px] flex items-center w-[124px]">biological factors</div>
        <div className="w-[152px] h-[26px] -mt-px bg-white rounded-b-[6px] [box-shadow:0_1px_2px_#0002] flex flex-col items-center justify-center">
          <span className="text-[#222] font-medium leading-[18px] mt-[2px] text-[13.4px]">Biological Dashboard</span>
          <div className="w-[135px] h-[2px] bg-[#107c41]" />
        </div>
        <div className="w-px h-[18px] bg-[#c8c8c8] mt-[5px] ml-[4px]" />
        <div className="ml-[42px] h-[28px] flex items-center text-[20px] font-light text-[#444] leading-none">+</div>
        <div className="ml-[357px] h-[28px] flex items-center font-bold text-[#333]">⋮</div>
        <div className="ml-[11px] mt-[5px] flex-1 h-[15px] flex items-center bg-[#f8f8f8] rounded-l-[6px]">
          <svg width="6" height="9" viewBox="0 0 6 9" className="ml-[6px]"><path d="M6 0v9L0 4.5Z" fill="#555" /></svg>
          <div className="ml-[3px] w-[447px] h-[9px] rounded-full bg-[#707070]" />
          <svg width="6" height="9" viewBox="0 0 6 9" className="ml-[33px]"><path d="M0 0v9l6-4.5Z" fill="#555" /></svg>
        </div>
      </div>

      {/* Selected cell */}
      <div className="absolute left-[1047px] top-[600px] w-[48px] h-[17px] border-2 border-[#107c41]">
        <div className="absolute -right-[2px] -bottom-[2px] w-[5px] h-[5px] bg-[#107c41]" />
      </div>

      {/* Chart tooltip */}
      <div className="absolute left-[570px] top-[464px] w-[80px] h-[20px] bg-white border border-[#666] [box-shadow:2px_2px_3px_#0009] pl-[5px] text-[11.5px] leading-[18px] text-[#44546a] font-['Noto_Sans',sans-serif]">
        Category: 0
      </div>
      <div className="absolute left-[570px] top-[448px] w-[70px] h-[19px] bg-white border border-[#666] [box-shadow:2px_2px_3px_#0009] pl-[5px] text-[11.5px] leading-[17px] text-[#44546a] font-['Noto_Sans',sans-serif]">
        Chart Area
      </div>

      {/* Watermark */}
      <div className="absolute left-[580px] top-[557px] w-[170px] flex flex-col items-center pointer-events-none select-none">
        <span dir="rtl" className="font-['DejaVu_Sans',sans-serif] font-bold text-[47px] leading-[66px] text-[#8a8a8a]/40 [-webkit-text-stroke:3px_#8a8a8a66]">مستقل</span>
        <span className="font-['Liberation_Sans',sans-serif] font-bold text-[26px] leading-[26px] -mt-[8px] text-[#b5b5b5]/60">mostaql.com</span>
      </div>
    </div>
  );
}
